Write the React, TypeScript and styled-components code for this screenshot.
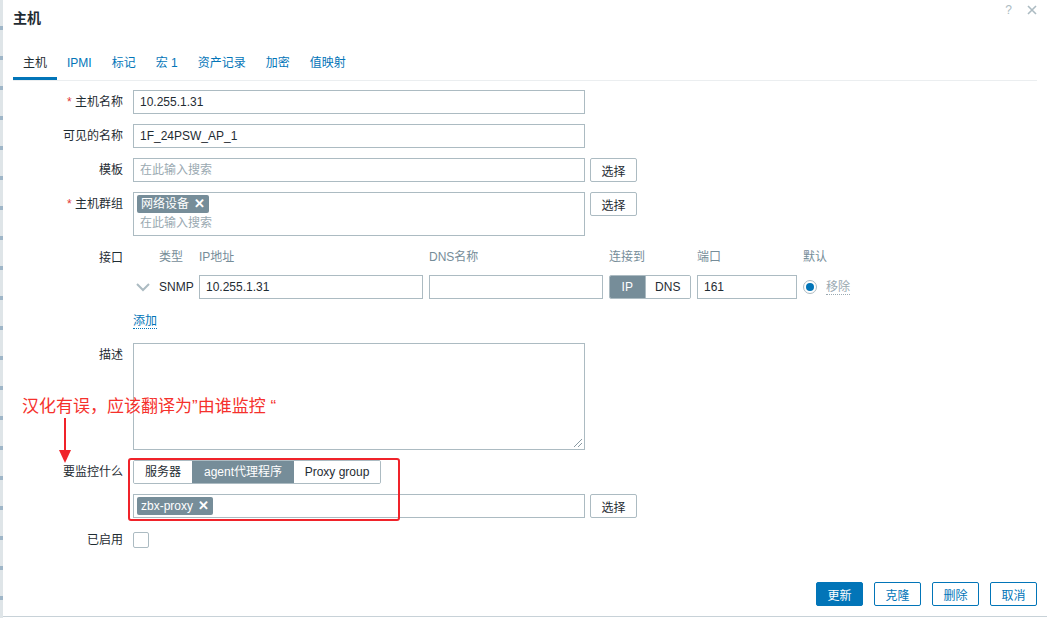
import styled, { createGlobalStyle } from "styled-components";

const GlobalStyle = createGlobalStyle`
  body {
    margin: 0;
    font-family: "Liberation Sans", Arial, "Noto Sans CJK SC", sans-serif;
    font-size: 12px;
    color: #1f2c33;
    background: #ffffff;
  }
`;

const Page = styled.div`
  display: flex;
  width: 1047px;
  height: 618px;
  overflow: hidden;
`;

const SideStrip = styled.div`
  width: 3px;
  background: repeating-linear-gradient(
    to bottom,
    #dfe5e8 0px,
    #dfe5e8 26px,
    #9fb6c8 26px,
    #9fb6c8 30px
  );
`;

const Dialog = styled.div`
  position: relative;
  flex: 1;
  height: 617px;
  display: flex;
  flex-direction: column;
  background: #ffffff;
  border-bottom: 1px solid #c8d2d8;
  padding: 0 10px;
  box-sizing: border-box;
`;

const Header = styled.div`
  display: flex;
  align-items: center;
  justify-content: space-between;
  padding-top: 9px;
  height: 18px;
`;

const Title = styled.h4`
  margin: 0;
  font-size: 14px;
  line-height: 18px;
  font-weight: bold;
`;

const HeaderIcons = styled.div`
  display: flex;
  align-items: center;
  gap: 15px;
  margin-top: -17px;
  color: #acbbc2;
  font-size: 12px;
`;

const TabBar = styled.div`
  display: flex;
  margin-top: 23px;
  border-bottom: 1px solid #ebeef0;
`;

const Tab = styled.span<{ $active?: boolean }>`
  padding: 6px 10px 7px;
  line-height: 14px;
  color: ${(p) => (p.$active ? "#1f2c33" : "#0275b8")};
  border-bottom: 3px solid ${(p) => (p.$active ? "#0275b8" : "transparent")};
`;

const Form = styled.div`
  display: grid;
  grid-template-columns: 120px 1fr;
  row-gap: 10px;
  margin-top: 9px;
`;

const Label = styled.label<{ $required?: boolean }>`
  text-align: right;
  padding-right: 10px;
  line-height: 24px;
  &::before {
    content: ${(p) => (p.$required ? '"* "' : '""')};
    color: #e33734;
  }
`;

const Field = styled.div`
  display: flex;
  align-items: flex-start;
  gap: 5px;
`;

const Input = styled.div<{ $width?: number }>`
  width: ${(p) => p.$width ?? 452}px;
  height: 24px;
  box-sizing: border-box;
  border: 1px solid #acbbc2;
  padding: 0 6px;
  line-height: 22px;
  color: #1f2c33;
  background: #ffffff;
`;

const MultiSelect = styled.div<{ $tall?: boolean }>`
  width: 452px;
  height: ${(p) => (p.$tall ? 44 : 24)}px;
  box-sizing: border-box;
  border: 1px solid #acbbc2;
  padding: 2px 3px;
  display: flex;
  flex-direction: column;
  gap: 1px;
`;

const Placeholder = styled.span`
  color: #9aa9b1;
  line-height: 18px;
  padding-left: 3px;
`;

const Tag = styled.span`
  align-self: flex-start;
  display: inline-flex;
  align-items: center;
  gap: 5px;
  height: 18px;
  padding: 0 4px;
  border-radius: 2px;
  background: #768d99;
  color: #ffffff;
  line-height: 18px;
`;

const TagClose = styled.span`
  font-size: 13px;
  font-weight: bold;
`;

const SelectButton = styled.button`
  width: 47px;
  height: 24px;
  box-sizing: border-box;
  border: 1px solid #acbbc2;
  border-radius: 2px;
  background: #ffffff;
  color: #1f2c33;
  font: inherit;
  padding: 0;
`;

const Interfaces = styled.div`
  display: grid;
  grid-template-columns: 20px 34px 224px 174px 82px 100px auto;
  column-gap: 6px;
  row-gap: 7px;
  align-items: center;
`;

const ColHead = styled.span`
  color: #768d99;
  line-height: 22px;
`;

const Chevron = styled.span`
  display: flex;
  justify-content: center;
  color: #acbbc2;
`;

const Toggle = styled.div`
  display: flex;
  height: 24px;
  box-sizing: border-box;
  border: 1px solid #acbbc2;
  border-radius: 2px;
  overflow: hidden;
`;

const ToggleItem = styled.span<{ $active?: boolean; $w: number }>`
  width: ${(p) => p.$w}px;
  text-align: center;
  line-height: 22px;
  background: ${(p) => (p.$active ? "#768d99" : "#ffffff")};
  color: ${(p) => (p.$active ? "#ffffff" : "#1f2c33")};
  & + & {
    border-left: 1px solid #acbbc2;
  }
`;

const DefaultCell = styled.div`
  display: flex;
  align-items: center;
  gap: 9px;
`;

const Radio = styled.span`
  width: 14px;
  height: 14px;
  box-sizing: border-box;
  border: 1px solid #acbbc2;
  border-radius: 50%;
  display: flex;
  align-items: center;
  justify-content: center;
  &::after {
    content: "";
    width: 8px;
    height: 8px;
    border-radius: 50%;
    background: #0275b8;
  }
`;

const DottedLink = styled.span<{ $muted?: boolean }>`
  color: ${(p) => (p.$muted ? "#9aa9b1" : "#0275b8")};
  border-bottom: 1px dotted ${(p) => (p.$muted ? "#9aa9b1" : "#0275b8")};
  line-height: 14px;
`;

const LinkRow = styled.div`
  display: flex;
  align-items: center;
  height: 24px;
`;

const TextArea = styled.div`
  position: relative;
  width: 452px;
  height: 107px;
  box-sizing: border-box;
  border: 1px solid #acbbc2;
`;

const Grip = styled.svg`
  position: absolute;
  right: 1px;
  bottom: 1px;
`;

const Stack = styled.div`
  display: flex;
  flex-direction: column;
  gap: 10px;
`;

const Segmented = styled.div`
  display: flex;
  align-self: flex-start;
  height: 24px;
  box-sizing: border-box;
  border: 1px solid #acbbc2;
  border-radius: 2px;
  overflow: hidden;
`;

const Segment = styled.span<{ $active?: boolean; $w: number }>`
  width: ${(p) => p.$w}px;
  text-align: center;
  line-height: 22px;
  background: ${(p) => (p.$active ? "#768d99" : "#ffffff")};
  color: ${(p) => (p.$active ? "#ffffff" : "#1f2c33")};
`;

const Checkbox = styled.span`
  width: 16px;
  height: 16px;
  box-sizing: border-box;
  border: 1px solid #acbbc2;
  border-radius: 2px;
  margin-top: 4px;
`;

const Footer = styled.div`
  margin-top: auto;
  display: flex;
  justify-content: flex-end;
  gap: 11px;
  padding-bottom: 10px;
`;

const FooterButton = styled.button<{ $primary?: boolean }>`
  width: 47px;
  height: 24px;
  box-sizing: border-box;
  border: 1px solid #0275b8;
  border-radius: 2px;
  background: ${(p) => (p.$primary ? "#0275b8" : "#ffffff")};
  color: ${(p) => (p.$primary ? "#ffffff" : "#0275b8")};
  font: inherit;
  padding: 0;
`;

const Note = styled.div`
  position: absolute;
  left: 19px;
  top: 396px;
  color: #f5312c;
  font-size: 17px;
  line-height: 22px;
  white-space: nowrap;
`;

const Arrow = styled.svg`
  position: absolute;
  left: 52px;
  top: 418px;
`;

const Highlight = styled.div`
  position: absolute;
  left: 125px;
  top: 458px;
  width: 272px;
  height: 63px;
  box-sizing: border-box;
  border: 2px solid #f0232a;
  border-radius: 3px;
`;

export default function App() {
  return (
    <>
      <GlobalStyle />
      <Page>
        <SideStrip />
        <Dialog>
          <Header>
            <Title>主机</Title>
            <HeaderIcons>
              <span>?</span>
              <svg width="10" height="10" viewBox="0 0 10 10">
                <path d="M1 1 L9 9 M9 1 L1 9" stroke="#acbbc2" strokeWidth="1.6" />
              </svg>
            </HeaderIcons>
          </Header>
          <TabBar>
            <Tab $active>主机</Tab>
            <Tab>IPMI</Tab>
            <Tab>标记</Tab>
            <Tab>宏 1</Tab>
            <Tab>资产记录</Tab>
            <Tab>加密</Tab>
            <Tab>值映射</Tab>
          </TabBar>
          <Form>
            <Label $required>主机名称</Label>
            <Field>
              <Input>10.255.1.31</Input>
            </Field>

            <Label>可见的名称</Label>
            <Field>
              <Input>1F_24PSW_AP_1</Input>
            </Field>

            <Label>模板</Label>
            <Field>
              <MultiSelect>
                <Placeholder>在此输入搜索</Placeholder>
              </MultiSelect>
              <SelectButton>选择</SelectButton>
            </Field>

            <Label $required>主机群组</Label>
            <Field>
              <MultiSelect $tall>
                <Tag>
                  网络设备 <TagClose>✕</TagClose>
                </Tag>
                <Placeholder>在此输入搜索</Placeholder>
              </MultiSelect>
              <SelectButton>选择</SelectButton>
            </Field>

            <Label>接口</Label>
            <Interfaces>
              <span />
              <ColHead>类型</ColHead>
              <ColHead>IP地址</ColHead>
              <ColHead>DNS名称</ColHead>
              <ColHead>连接到</ColHead>
              <ColHead>端口</ColHead>
              <ColHead>默认</ColHead>

              <Chevron>
                <svg width="14" height="9" viewBox="0 0 14 9">
                  <path d="M1 1 L7 7 L13 1" fill="none" stroke="#acbbc2" strokeWidth="2" />
                </svg>
              </Chevron>
              <span>SNMP</span>
              <Input $width={224}>10.255.1.31</Input>
              <Input $width={174} />
              <Toggle>
                <ToggleItem $active $w={35}>
                  IP
                </ToggleItem>
                <ToggleItem $w={45}>DNS</ToggleItem>
              </Toggle>
              <Input $width={100}>161</Input>
              <DefaultCell>
                <Radio />
                <DottedLink $muted>移除</DottedLink>
              </DefaultCell>
            </Interfaces>

            <span />
            <LinkRow>
              <DottedLink>添加</DottedLink>
            </LinkRow>

            <Label>描述</Label>
            <Field>
              <TextArea>
                <Grip width="10" height="10" viewBox="0 0 10 10">
                  <path d="M9 1 L1 9 M9 5 L5 9" stroke="#8a9aa3" strokeWidth="1" />
                </Grip>
              </TextArea>
            </Field>

            <Label>要监控什么</Label>
            <Stack>
              <Segmented>
                <Segment $w={58}>服务器</Segment>
                <Segment $active $w={102}>
                  agent代理程序
                </Segment>
                <Segment $w={86}>Proxy group</Segment>
              </Segmented>
              <Field>
                <MultiSelect>
                  <Tag>
                    zbx-proxy <TagClose>✕</TagClose>
                  </Tag>
                </MultiSelect>
                <SelectButton>选择</SelectButton>
              </Field>
            </Stack>

            <Label>已启用</Label>
            <Field>
              <Checkbox />
            </Field>
          </Form>
          <Footer>
            <FooterButton $primary>更新</FooterButton>
            <FooterButton>克隆</FooterButton>
            <FooterButton>删除</FooterButton>
            <FooterButton>取消</FooterButton>
          </Footer>

          <Note>汉化有误，应该翻译为”由谁监控 “</Note>
          <Arrow width="20" height="46" viewBox="0 0 20 46">
            <line x1="10" y1="0" x2="10" y2="34" stroke="#f0232a" strokeWidth="2" />
            <path d="M4 32 L16 32 L10 45 Z" fill="#f0232a" />
          </Arrow>
          <Highlight />
        </Dialog>
      </Page>
    </>
  );
}
